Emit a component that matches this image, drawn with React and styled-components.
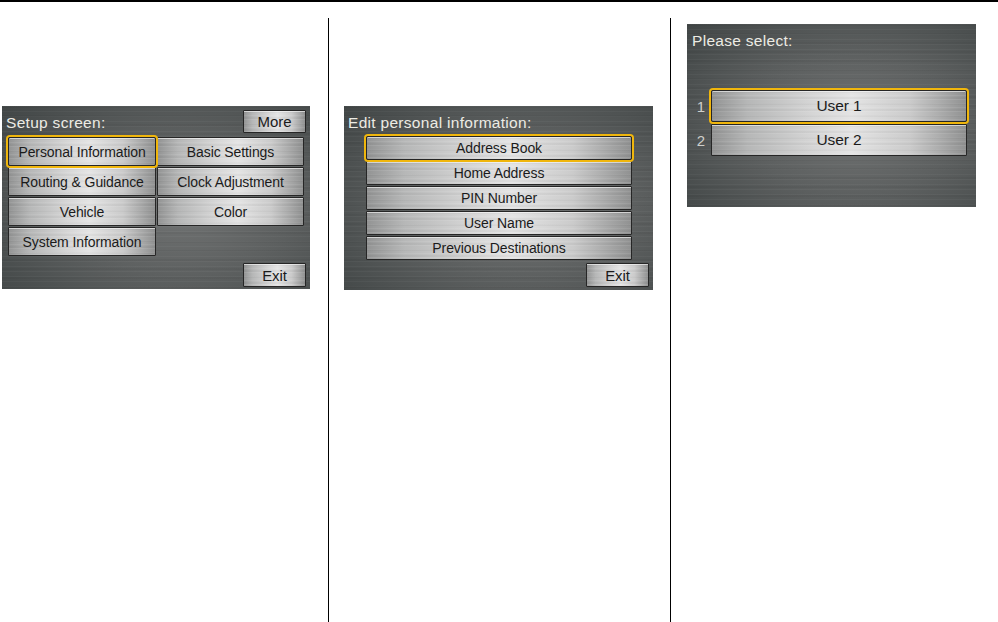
import React from "react";
import styled, { createGlobalStyle, css } from "styled-components";

const GlobalStyle = createGlobalStyle`
  html, body {
    margin: 0;
    padding: 0;
    background: #ffffff;
  }
  body {
    font-family: "Liberation Sans", Arial, sans-serif;
  }
`;

const brushed = css`
  repeating-linear-gradient(180deg, rgba(255, 255, 255, 0.035) 0 1px, transparent 1px 5px),
  repeating-linear-gradient(180deg, rgba(0, 0, 0, 0.04) 0 2px, transparent 2px 9px)
`;

const Page = styled.div`
  height: 100vh;
  display: flex;
  flex-direction: column;
  border-top: 2px solid #000;
  box-sizing: border-box;
`;

const Columns = styled.div`
  flex: 1;
  margin-top: 16px;
  display: grid;
  grid-template-columns: 328px 342px 1fr;
`;

const Column = styled.div`
  padding: ${(p) => p.$pad};
  border-left: ${(p) => (p.$divider ? "1px solid #000" : "none")};
`;

const Screen = styled.div`
  box-sizing: border-box;
  width: ${(p) => p.$w}px;
  height: ${(p) => p.$h}px;
  padding: ${(p) => p.$pad};
  display: flex;
  flex-direction: column;
  background: ${brushed},
    radial-gradient(ellipse 80% 85% at 58% 55%, #727474 0%, #5d6060 45%, #3f4444 100%);
`;

const HeaderRow = styled.div`
  height: 23px;
  display: flex;
  align-items: center;
  justify-content: space-between;
`;

const Title = styled.div`
  height: 23px;
  line-height: 25px;
  font-size: 15.5px;
  letter-spacing: 0.3px;
  white-space: nowrap;
  color: #ecebe4;
`;

const metal = css`
  box-sizing: border-box;
  display: flex;
  align-items: center;
  justify-content: center;
  white-space: nowrap;
  font-size: 14px;
  letter-spacing: -0.1px;
  color: #1b1b1b;
  border: 1px solid #262626;
  border-radius: 1px;
  box-shadow: inset 0 1px 0 rgba(255, 255, 255, 0.55);
  background:
    repeating-linear-gradient(180deg, rgba(255, 255, 255, 0.08) 0 1px, transparent 1px 4px),
    repeating-linear-gradient(180deg, rgba(0, 0, 0, 0.03) 0 2px, transparent 2px 6px),
    linear-gradient(90deg, #939494 0%, #b6b7b7 14%, #d6d6d6 40%, #e4e4e4 55%, #cbcbcb 78%, #909191 100%);
`;

const MetalButton = styled.div`
  ${metal};
  position: relative;
  ${(p) =>
    p.$selected &&
    css`
      z-index: 1;
      box-shadow: inset 0 1px 0 rgba(255, 255, 255, 0.55), 0 0 0 2px #f0b60c;
      border-radius: 2px;
    `}
`;

const SmallButton = styled.div`
  ${metal};
  width: 63px;
  height: ${(p) => p.$h || 24}px;
  font-size: 15px;
`;

const MenuGrid = styled.div`
  margin: 4px 2px 0 2px;
  display: grid;
  grid-template-columns: 148px 147px;
  grid-auto-rows: 29px;
  gap: 1px;
`;

const ListStack = styled.div`
  margin: 3px 17px 0 18px;
  display: grid;
  grid-auto-rows: 24px;
  gap: 1px;
`;

const FooterRow = styled.div`
  margin-top: auto;
  display: flex;
  justify-content: flex-end;
`;

const SelectList = styled.div`
  margin-top: 39px;
  display: flex;
  flex-direction: column;
  gap: 2px;
`;

const SelectRow = styled.div`
  display: flex;
  align-items: center;
  height: 32px;
`;

const RowNumber = styled.span`
  width: 20px;
  margin-left: -1px;
  text-align: center;
  font-size: 15px;
  color: #cfcfcb;
`;

const SelectButton = styled(MetalButton)`
  width: 256px;
  height: 100%;
  font-size: 15.5px;
`;

const setupItems = [
  ["Personal Information", true],
  ["Basic Settings"],
  ["Routing & Guidance"],
  ["Clock Adjustment"],
  ["Vehicle"],
  ["Color"],
  ["System Information"],
];

const personalItems = [
  ["Address Book", true],
  ["Home Address"],
  ["PIN Number"],
  ["User Name"],
  ["Previous Destinations"],
];

const users = [
  ["1", "User 1", true],
  ["2", "User 2"],
];

export default function App() {
  return (
    <>
      <GlobalStyle />
      <Page>
        <Columns>
          <Column $pad="88px 0 0 2px">
            <Screen $w={308} $h={183} $pad="4px 4px 2px 4px">
              <HeaderRow>
                <Title>Setup screen:</Title>
                <SmallButton $h={23}>More</SmallButton>
              </HeaderRow>
              <MenuGrid>
                {setupItems.map(([label, sel]) => (
                  <MetalButton key={label} $selected={sel}>
                    {label}
                  </MetalButton>
                ))}
              </MenuGrid>
              <FooterRow>
                <SmallButton>Exit</SmallButton>
              </FooterRow>
            </Screen>
          </Column>
          <Column $divider $pad="88px 0 0 15px">
            <Screen $w={309} $h={184} $pad="4px 4px 3px 4px">
              <Title>Edit personal information:</Title>
              <ListStack>
                {personalItems.map(([label, sel]) => (
                  <MetalButton key={label} $selected={sel}>
                    {label}
                  </MetalButton>
                ))}
              </ListStack>
              <FooterRow>
                <SmallButton>Exit</SmallButton>
              </FooterRow>
            </Screen>
          </Column>
          <Column $divider $pad="6px 0 0 16px">
            <Screen $w={289} $h={183} $pad="4px 5px">
              <Title>Please select:</Title>
              <SelectList>
                {users.map(([num, label, sel]) => (
                  <SelectRow key={num}>
                    <RowNumber>{num}</RowNumber>
                    <SelectButton $selected={sel}>{label}</SelectButton>
                  </SelectRow>
                ))}
              </SelectList>
            </Screen>
          </Column>
        </Columns>
      </Page>
    </>
  );
}
